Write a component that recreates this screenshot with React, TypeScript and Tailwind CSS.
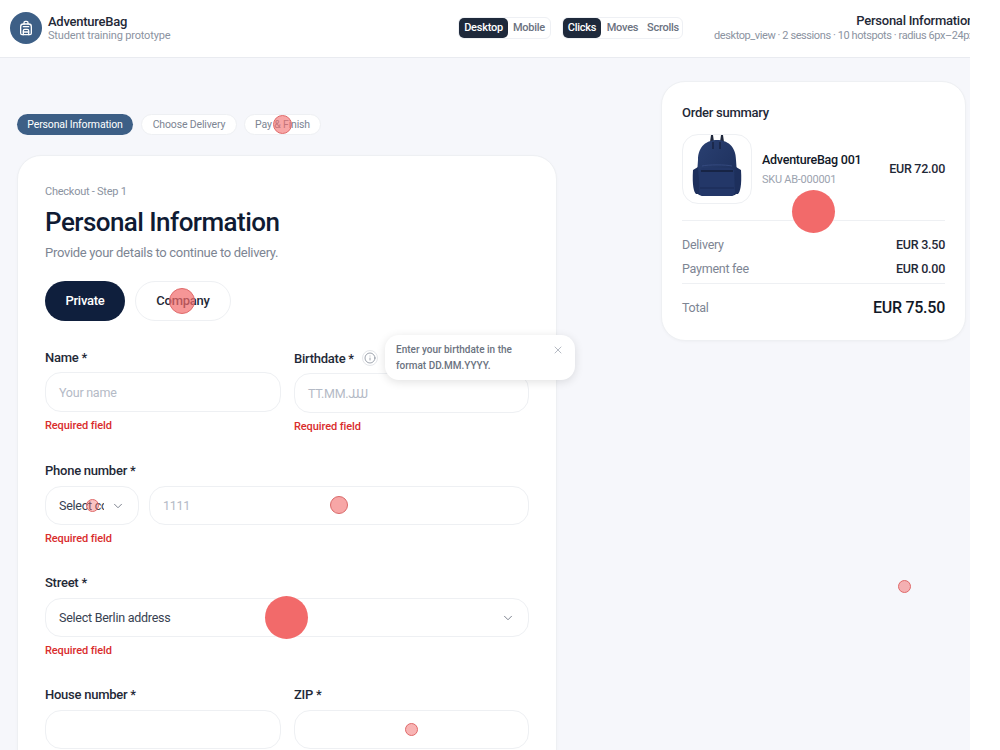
import { Backpack, ChevronDown, Info, X } from 'lucide-react';

function Field({ label, placeholder, labelClass = 'leading-[21px]', inputClass = 'h-[40px]' }: { label: string; placeholder?: string; labelClass?: string; inputClass?: string }) {
  return (
    <div>
      <p className={`h-[20px] text-[13px] font-medium text-[#1f2937] ${labelClass}`}>{label}</p>
      <div className={`mt-[5px] flex items-center rounded-[16px] border border-[#eef0f3] bg-white px-[13px] pt-[2px] text-[12.5px] text-[#b4bac6] ${inputClass}`}>
        {placeholder}
      </div>
    </div>
  );
}

function Required() {
  return <p className="mt-[6px] h-[16px] text-[11px] leading-[16px] font-medium tracking-[-0.1px] text-[#d92d2d]">Required field</p>;
}

function BagPhoto() {
  return (
    <svg width="50" height="64" viewBox="0 0 50 64">
      <defs>
        <linearGradient id="bag" x1="0" y1="0" x2="1" y2="1">
          <stop offset="0" stopColor="#2a4072" />
          <stop offset="1" stopColor="#1b2d58" />
        </linearGradient>
      </defs>
      <path d="M18 8 L19 1 L21 1 L22 8 M28 8 L29 1 L31 1 L32 8" fill="#20283c" />
      <path d="M6 26 C6 12 15 6 25 6 C35 6 44 12 44 26 L46 54 C46 60 43 62 38 62 L12 62 C7 62 4 60 4 54 Z" fill="url(#bag)" />
      <path d="M1 36 L6 33 L8 60 L4 60 C2 58 0 52 1 36 Z M49 36 L44 33 L42 60 L46 60 C48 58 50 52 49 36 Z" fill="#1d2f5c" />
      <path d="M8 37 C8 35 10 34 12 34 L38 34 C40 34 42 35 42 37 L43 58 C43 60 41 62 38 62 L12 62 C9 62 7 60 7 58 Z" fill="#233768" />
      <path d="M9 37 L41 37" stroke="#10182f" strokeWidth="1.2" />
      <path d="M10 32 C16 30.5 34 30.5 40 32" stroke="#384e84" strokeWidth="0.8" fill="none" />
      <path d="M21 8 L21 15 M28 8 L28 15" stroke="#141d38" strokeWidth="1.2" />
      <path d="M8 54 L42 54" stroke="#1b2b55" strokeWidth="1" />
    </svg>
  );
}

export default function App() {
  return (
    <div className="relative h-[750px] w-[970px] overflow-hidden bg-[#f6f7fb] font-['Roboto','Open_Sans',sans-serif] tracking-[-0.25px]">
      <header className="flex h-[58px] items-center border-b border-[#e9ebf0] bg-white pb-[1px] pl-[10px]">
        <div className="flex h-[32px] w-[32px] shrink-0 items-center justify-center rounded-full bg-[#3d5f86] text-white">
          <Backpack size={16} strokeWidth={2} />
        </div>
        <div className="ml-[6px] w-[150px] shrink-0">
          <p className="text-[13px] leading-[15px] font-medium whitespace-nowrap text-[#1f2937]">AdventureBag</p>
          <p className="text-[11px] leading-[13px] tracking-[-0.17px] whitespace-nowrap text-[#8b93a1]">Student training prototype</p>
        </div>
        <div className="ml-[260px] flex h-[22px] shrink-0 items-center rounded-[6px] border border-[#eef0f4] bg-white text-[11px] font-medium text-[#6b7280]">
          <span className="flex h-full w-[49px] items-center justify-center rounded-[5px] bg-[#1e293b] text-white">Desktop</span>
          <span className="flex w-[42px] justify-center">Mobile</span>
        </div>
        <div className="ml-[11px] flex h-[22px] shrink-0 items-center rounded-[6px] border border-[#eef0f4] bg-white text-[11px] font-medium text-[#6b7280]">
          <span className="flex h-full w-[38px] items-center justify-center rounded-[5px] bg-[#1e293b] text-white">Clicks</span>
          <span className="flex w-[43px] justify-center">Moves</span>
          <span className="flex w-[38px] justify-center">Scrolls</span>
        </div>
        <div className="ml-[29px] w-[262px] shrink-0 text-right">
          <p className="text-[13px] leading-[16px] font-medium whitespace-nowrap text-[#1f2937]">Personal Information</p>
          <p className="text-[11px] leading-[14px] tracking-[-0.42px] whitespace-nowrap text-[#8b93a1]">desktop_view · 2 sessions · 10 hotspots · radius 6px–24px</p>
        </div>
      </header>

      <main className="flex items-start pl-[17px]">
        <section className="mt-[56px] w-[540px]">
          <div className="flex gap-[7px] text-[10.5px] tracking-[-0.15px]">
            <span className="mr-[1px] flex h-[21px] w-[116px] items-center justify-center rounded-full bg-[#3d5f86] pt-[1px] text-white">Personal Information</span>
            <span className="flex h-[21px] w-[96px] items-center justify-center rounded-full border border-[#eef0f3] bg-white pt-[1px] text-[#7d8593]">Choose Delivery</span>
            <span className="flex h-[21px] w-[77px] items-center justify-center rounded-full border border-[#eef0f3] bg-white pt-[1px] text-[#7d8593]">Pay &amp; Finish</span>
          </div>

          <div className="mt-[20px] rounded-t-[24px] border border-[#eef0f3] bg-white px-[27px] pt-[28px] pb-[40px] shadow-[0_1px_3px_rgba(0,0,0,0.03)]">
            <p className="text-[11px] leading-[15px] text-[#8b93a1]">Checkout - Step 1</p>
            <h1 className="mt-[5px] text-[26px] leading-[36px] font-medium tracking-[-0.55px] text-[#0f1b33]">Personal Information</h1>
            <p className="mt-[4px] text-[13px] leading-[18px] tracking-[-0.3px] text-[#7d8593]">Provide your details to continue to delivery.</p>

            <div className="mt-[19px] flex gap-[10px] text-[13px] font-medium">
              <span className="flex h-[40px] w-[80px] items-center justify-center rounded-full bg-[#0f1f3d] text-white">Private</span>
              <span className="flex h-[40px] w-[96px] items-center justify-center rounded-full border border-[#eef0f3] bg-white text-[#1f2937]">Company</span>
            </div>

            <div className="mt-[26px] grid grid-cols-[236px_235px] gap-x-[13px]">
              <div>
                <Field label="Name *" placeholder="Your name" />
                <Required />
              </div>
              <div className="pt-[1px]">
                <div className="flex h-[20px] items-center gap-[8px]">
                  <p className="pt-[1px] text-[13px] leading-[20px] font-medium text-[#1f2937]">Birthdate *</p>
                  <span className="flex h-[16px] w-[16px] items-center justify-center rounded-full border border-[#e5e7eb] text-[#7d8593]">
                    <Info size={12} strokeWidth={1.5} />
                  </span>
                </div>
                <div className="mt-[5px] flex h-[40px] items-center rounded-[16px] border border-[#eef0f3] bg-white px-[13px] pt-[2px] text-[12.5px] tracking-[-0.3px] text-[#b4bac6]">
                  <span>TT.MM.<span className="tracking-[-2.6px]">JJJJ</span></span>
                </div>
                <Required />
              </div>
            </div>

            <div className="mt-[26px]">
              <p className="h-[20px] text-[13px] leading-[20px] font-medium text-[#1f2937]">Phone number *</p>
              <div className="mt-[5px] flex gap-[10px]">
                <div className="flex h-[39px] w-[94px] items-center rounded-[16px] border border-[#eef0f3] bg-white px-[13px] text-[12.5px] text-[#374151]">
                  <span className="w-[45px] overflow-hidden pt-[2px] whitespace-nowrap">Select country</span>
                  <ChevronDown className="ml-auto text-[#6b7280]" size={14} strokeWidth={1.5} />
                </div>
                <div className="flex h-[39px] flex-1 items-center rounded-[16px] border border-[#eef0f3] bg-white px-[13px] pt-[2px] text-[12.5px] text-[#b4bac6]">1111</div>
              </div>
              <Required />
            </div>

            <div className="mt-[26px]">
              <p className="h-[20px] text-[13px] leading-[20px] font-medium text-[#1f2937]">Street *</p>
              <div className="mt-[5px] flex h-[39px] items-center justify-between rounded-[16px] border border-[#eef0f3] bg-white px-[13px] text-[12.5px] text-[#374151]">
                <span className="pt-[2px]">Select Berlin address</span>
                <ChevronDown className="text-[#6b7280]" size={14} strokeWidth={1.5} />
              </div>
              <Required />
            </div>

            <div className="mt-[26px] grid grid-cols-[236px_235px] gap-x-[13px]">
              <Field label="House number *" labelClass="leading-[19px]" inputClass="h-[39px]" />
              <Field label="ZIP *" labelClass="leading-[19px]" inputClass="h-[39px]" />
            </div>
          </div>
        </section>

        <aside className="mt-[23px] ml-[104px] w-[305px] rounded-[24px] border border-[#eef0f3] bg-white px-[20px] pt-[21px] pb-[21px] shadow-[0_1px_3px_rgba(0,0,0,0.03)]">
          <p className="text-[13px] leading-[20px] font-medium text-[#1f2937]">Order summary</p>
          <div className="mt-[11px] flex items-center border-b border-[#eef0f3] pb-[16px]">
            <div className="flex h-[70px] w-[70px] items-center justify-center rounded-[16px] border border-[#eef0f3] bg-white pb-[6px]">
              <BagPhoto />
            </div>
            <div className="ml-[10px]">
              <p className="text-[12.5px] leading-[18px] font-medium text-[#111827]">AdventureBag 001</p>
              <p className="mt-[3px] text-[11px] leading-[16px] text-[#9ca3af]">SKU AB-000001</p>
            </div>
            <p className="ml-auto text-[12.5px] font-medium text-[#1f2937]">EUR 72.00</p>
          </div>
          <div className="mt-[15px] flex h-[18px] items-center justify-between text-[12.5px]">
            <span className="text-[#7d8593]">Delivery</span>
            <span className="font-medium text-[#1f2937]">EUR 3.50</span>
          </div>
          <div className="mt-[6px] flex h-[18px] items-center justify-between text-[12.5px]">
            <span className="text-[#7d8593]">Payment fee</span>
            <span className="font-medium text-[#1f2937]">EUR 0.00</span>
          </div>
          <div className="mt-[5px] flex items-center justify-between border-t border-[#eef0f3] pt-[13px]">
            <span className="text-[12.5px] text-[#7d8593]">Total</span>
            <span className="text-[16px] leading-[22px] font-medium text-[#111827]">EUR 75.50</span>
          </div>
        </aside>
      </main>

      <div className="absolute top-[335px] left-[385px] flex h-[45px] w-[190px] justify-between rounded-[14px] bg-white px-[11px] py-[7px] text-[10px] leading-[16px] font-medium tracking-normal text-[#6b7280] shadow-[0_2px_10px_rgba(0,0,0,0.12)]">
        <p className="w-[130px]">Enter your birthdate in the format DD.MM.YYYY.</p>
        <X className="mt-[2px] text-[#9ca3af]" size={12} strokeWidth={1.5} />
      </div>

      <span className="absolute top-[115px] left-[273px] h-[19px] w-[19px] rounded-full border border-[#e06a6a] bg-[#f26a6a]/60" />
      <span className="absolute top-[288px] left-[169px] h-[26px] w-[26px] rounded-full border border-[#e06a6a] bg-[#f26a6a]/70" />
      <span className="absolute top-[499px] left-[86px] h-[13px] w-[13px] rounded-full border border-[#e06a6a] bg-[#f26a6a]/40" />
      <span className="absolute top-[496px] left-[330px] h-[18px] w-[18px] rounded-full border border-[#d96a6a] bg-[#f26a6a]/60" />
      <span className="absolute top-[596px] left-[265px] h-[43px] w-[43px] rounded-full bg-[#f26a6a]" />
      <span className="absolute top-[190px] left-[792px] h-[43px] w-[43px] rounded-full bg-[#f26a6a]" />
      <span className="absolute top-[580px] left-[898px] h-[13px] w-[13px] rounded-full border border-[#e06a6a] bg-[#f26a6a]/50" />
      <span className="absolute top-[723px] left-[405px] h-[13px] w-[13px] rounded-full border border-[#e06a6a] bg-[#f26a6a]/50" />
    </div>
  );
}
